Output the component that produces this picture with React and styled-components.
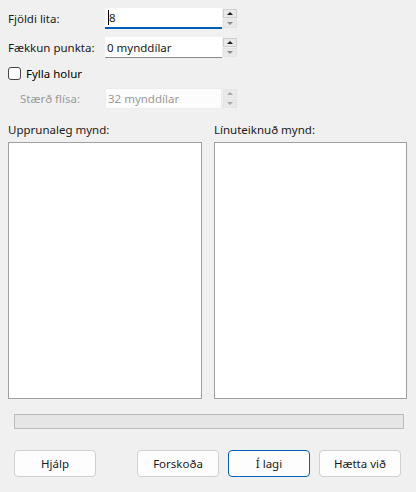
import React from "react";
import styled, { createGlobalStyle } from "styled-components";

const Global = createGlobalStyle`
  html, body { margin: 0; padding: 0; background: #f0f0f0; }
  body { font-family: "Noto Sans", "Open Sans", sans-serif; font-size: 11.5px; color: #000; }
`;

const Dialog = styled.div`
  width: 416px;
  height: 492px;
  box-sizing: border-box;
  padding: 8px 9px 0 8px;
  display: flex;
  flex-direction: column;
  background: #f0f0f0;
`;

const Form = styled.div`
  display: grid;
  grid-template-columns: 97px 117px 15px;
  row-gap: 8px;
  align-items: center;
`;

const Label = styled.label`
  color: ${(p) => (p.$disabled ? "#9a9a9a" : "#1a1a1a")};
  padding-left: ${(p) => (p.$indent ? "12px" : "0")};
  line-height: 16px;
`;

const Field = styled.div`
  height: 21px;
  box-sizing: border-box;
  background: #fff;
  border-bottom: ${(p) =>
    p.$disabled ? "none" : p.$focus ? "2px solid #005fb8" : "1px solid #8a8a8a"};
  display: flex;
  align-items: center;
  padding-left: 2px;
  color: ${(p) => (p.$disabled ? "#9a9a9a" : "#1a1a1a")};
  ${(p) => (p.$disabled ? "border: 1px solid #ececec; background: #fcfcfc;" : "")}
`;

const Caret = styled.span`
  border-left: 1px solid #000;
  margin-left: 1px;
`;

const Spin = styled.div`
  height: 19px;
  display: flex;
  flex-direction: column;
  gap: 1px;
  margin-left: 1px;
`;

const SpinBtn = styled.div`
  flex: 1;
  background: #e9e9e9;
  border: 1px solid ${(p) => (p.$dark ? "#cfcfcf" : "#e4e4e4")};
  display: flex;
  align-items: center;
  justify-content: center;
`;

const Arrow = styled.div`
  width: 0;
  height: 0;
  border-left: 3px solid transparent;
  border-right: 3px solid transparent;
  ${(p) =>
    p.$up
      ? `border-bottom: 3px solid ${p.$c};`
      : `border-top: 3px solid ${p.$c};`}
`;

const CheckRow = styled.div`
  grid-column: 1 / 4;
  display: flex;
  align-items: center;
  gap: 5px;
  height: 14px;
`;

const Box = styled.div`
  width: 11px;
  height: 11px;
  border: 1px solid #444;
  border-radius: 3px;
  background: #fff;
`;

const Panels = styled.div`
  display: grid;
  grid-template-columns: 194px 193px;
  column-gap: 12px;
  margin-top: 13px;
`;

const Panel = styled.div`
  display: flex;
  flex-direction: column;
  gap: 4px;
`;

const Caption = styled.div`
  color: #1a1a1a;
  line-height: 16px;
`;

const Picture = styled.div`
  height: 257px;
  box-sizing: border-box;
  background: #fff;
  border: 1px solid #a0a0a0;
`;

const Progress = styled.div`
  margin: 15px 3px 0 6px;
  height: 15px;
  box-sizing: border-box;
  background: #e6e6e6;
  border: 1px solid #bcbcbc;
`;

const ButtonRow = styled.div`
  display: flex;
  margin: 21px 0 0 6px;
  gap: 9px;
`;

const Button = styled.button`
  width: 82px;
  height: 27px;
  box-sizing: border-box;
  background: #fdfdfd;
  border: 1px solid ${(p) => (p.$def ? "#005fb8" : "#d0d0d0")};
  border-radius: 4px;
  font: inherit;
  color: #1a1a1a;
  padding: 0;
  margin-right: ${(p) => (p.$gap ? "32px" : "0")};
`;

function Spinner({ disabled }) {
  const c = disabled ? "#a8a8a8" : "#1a1a1a";
  const c2 = disabled ? "#a8a8a8" : "#8a8a8a";
  return (
    <Spin>
      <SpinBtn $dark={!disabled}>
        <Arrow $up $c={c} />
      </SpinBtn>
      <SpinBtn>
        <Arrow $c={c2} />
      </SpinBtn>
    </Spin>
  );
}

export default function App() {
  return (
    <Dialog>
      <Global />
      <Form>
        <Label>Fjöldi lita:</Label>
        <Field $focus>
          <Caret>8</Caret>
        </Field>
        <Spinner />
        <Label>Fækkun punkta:</Label>
        <Field>0 mynddílar</Field>
        <Spinner />
        <CheckRow>
          <Box />
          <span>Fylla holur</span>
        </CheckRow>
        <Label $disabled $indent>Stærð flísa:</Label>
        <Field $disabled>32 mynddílar</Field>
        <Spinner disabled />
      </Form>
      <Panels>
        <Panel>
          <Caption>Upprunaleg mynd:</Caption>
          <Picture />
        </Panel>
        <Panel>
          <Caption>Línuteiknuð mynd:</Caption>
          <Picture />
        </Panel>
      </Panels>
      <Progress />
      <ButtonRow>
        <Button $gap>Hjálp</Button>
        <Button>Forskoða</Button>
        <Button $def>Í lagi</Button>
        <Button>Hætta við</Button>
      </ButtonRow>
    </Dialog>
  );
}
